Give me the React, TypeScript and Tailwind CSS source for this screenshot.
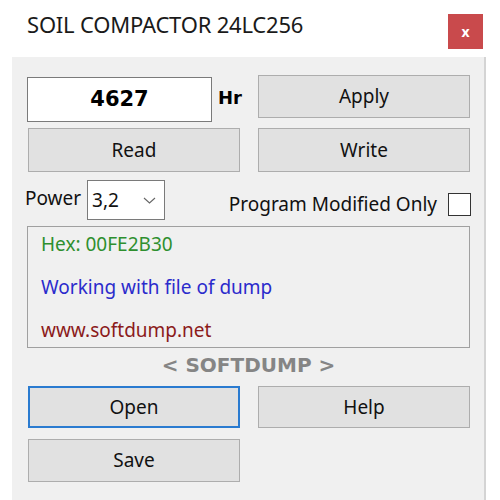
import React from "react";

const font = { fontFamily: '"Noto Sans", "Open Sans", sans-serif' };
const boldFont = { fontFamily: '"DejaVu Sans", Verdana, sans-serif' };

function Btn({ children, focused = false, className = "" }: { children: React.ReactNode; focused?: boolean; className?: string }) {
  return (
    <div
      className={
        "flex items-center justify-center bg-[#e1e1e1] text-[19px] text-[#111] leading-none " +
        (focused ? "border-2 border-[#2a7bd0] " : "border border-[#adadad] ") +
        className
      }
    >
      {children}
    </div>
  );
}

export default function App() {
  return (
    <div className="w-[500px] h-[500px] bg-white flex flex-col overflow-hidden" style={font}>
      <div className="h-[57px] flex items-start shrink-0">
        <div className="ml-[27px] mt-[13px] text-[22px] leading-none text-[#1a1a1a] tracking-[-0.2px]">SOIL COMPACTOR 24LC256</div>
        <div className="ml-auto mr-[17px] mt-[14px] w-[35px] h-[35px] bg-[#c94a4c] flex items-center justify-center text-white font-bold text-[14px] leading-none">
          x
        </div>
      </div>
      <div className="ml-[12px] w-[474px] flex-1 bg-[#f0f0f0] border-r-2 border-[#d4d4d4] pl-[15px] pt-[18px]">
        <div className="flex h-[47px]">
          <div className="w-[231px] flex items-start">
            <div
              className="mt-[2px] w-[185px] h-[45px] bg-white border border-[#7a7a7a] flex items-center justify-center text-[21px] font-bold text-black leading-none"
              style={boldFont}
            >
              4627
            </div>
            <div className="ml-[6px] mt-[14px] text-[18px] font-bold text-black leading-none" style={boldFont}>
              Hr
            </div>
          </div>
          <Btn className="w-[212px] h-[43px]">Apply</Btn>
        </div>
        <div className="flex mt-[6px]">
          <Btn className="ml-[1px] w-[212px] h-[44px]">Read</Btn>
          <Btn className="ml-[18px] w-[212px] h-[44px]">Write</Btn>
        </div>
        <div className="flex items-start mt-[8px] h-[46px]">
          <div className="ml-[-2px] mt-[9px] text-[19px] text-[#111] leading-none">Power</div>
          <div className="ml-[6px] w-[78px] h-[40px] bg-white border border-[#7a7a7a] flex items-center pl-[4px] text-[19px] text-[#111] leading-none">
            3,2
            <svg className="ml-[24px]" width="13" height="7" viewBox="0 0 13 7">
              <path d="M1 1 L6.5 6 L12 1" fill="none" stroke="#666" strokeWidth="1.1" />
            </svg>
          </div>
          <div className="ml-auto mr-[13px] mt-[13px] flex items-center">
            <div className="text-[19px] text-[#111] leading-none">Program Modified Only</div>
            <div className="ml-[11px] w-[23px] h-[23px] bg-white border border-[#333]"></div>
          </div>
        </div>
        <div className="w-[443px] h-[122px] border border-[#a0a0a0] pl-[13px] flex flex-col text-[19px] leading-none">
          <div className="mt-[8px] text-[#2e8f2e]">Hex: 00FE2B30</div>
          <div className="mt-[24px] text-[#2b2bcc]">Working with file of dump</div>
          <div className="mt-[24px] text-[#8b1a1a]">www.softdump.net</div>
        </div>
        <div className="w-[443px] mt-[7px] text-center text-[20px] font-bold text-[#858585] leading-none" style={boldFont}>
          &lt; SOFTDUMP &gt;
        </div>
        <div className="flex mt-[11px]">
          <Btn focused className="ml-[1px] w-[212px] h-[42px]">Open</Btn>
          <Btn className="ml-[18px] w-[212px] h-[42px]">Help</Btn>
        </div>
        <div className="flex mt-[11px]">
          <Btn className="ml-[1px] w-[212px] h-[43px]">Save</Btn>
        </div>
      </div>
    </div>
  );
}
